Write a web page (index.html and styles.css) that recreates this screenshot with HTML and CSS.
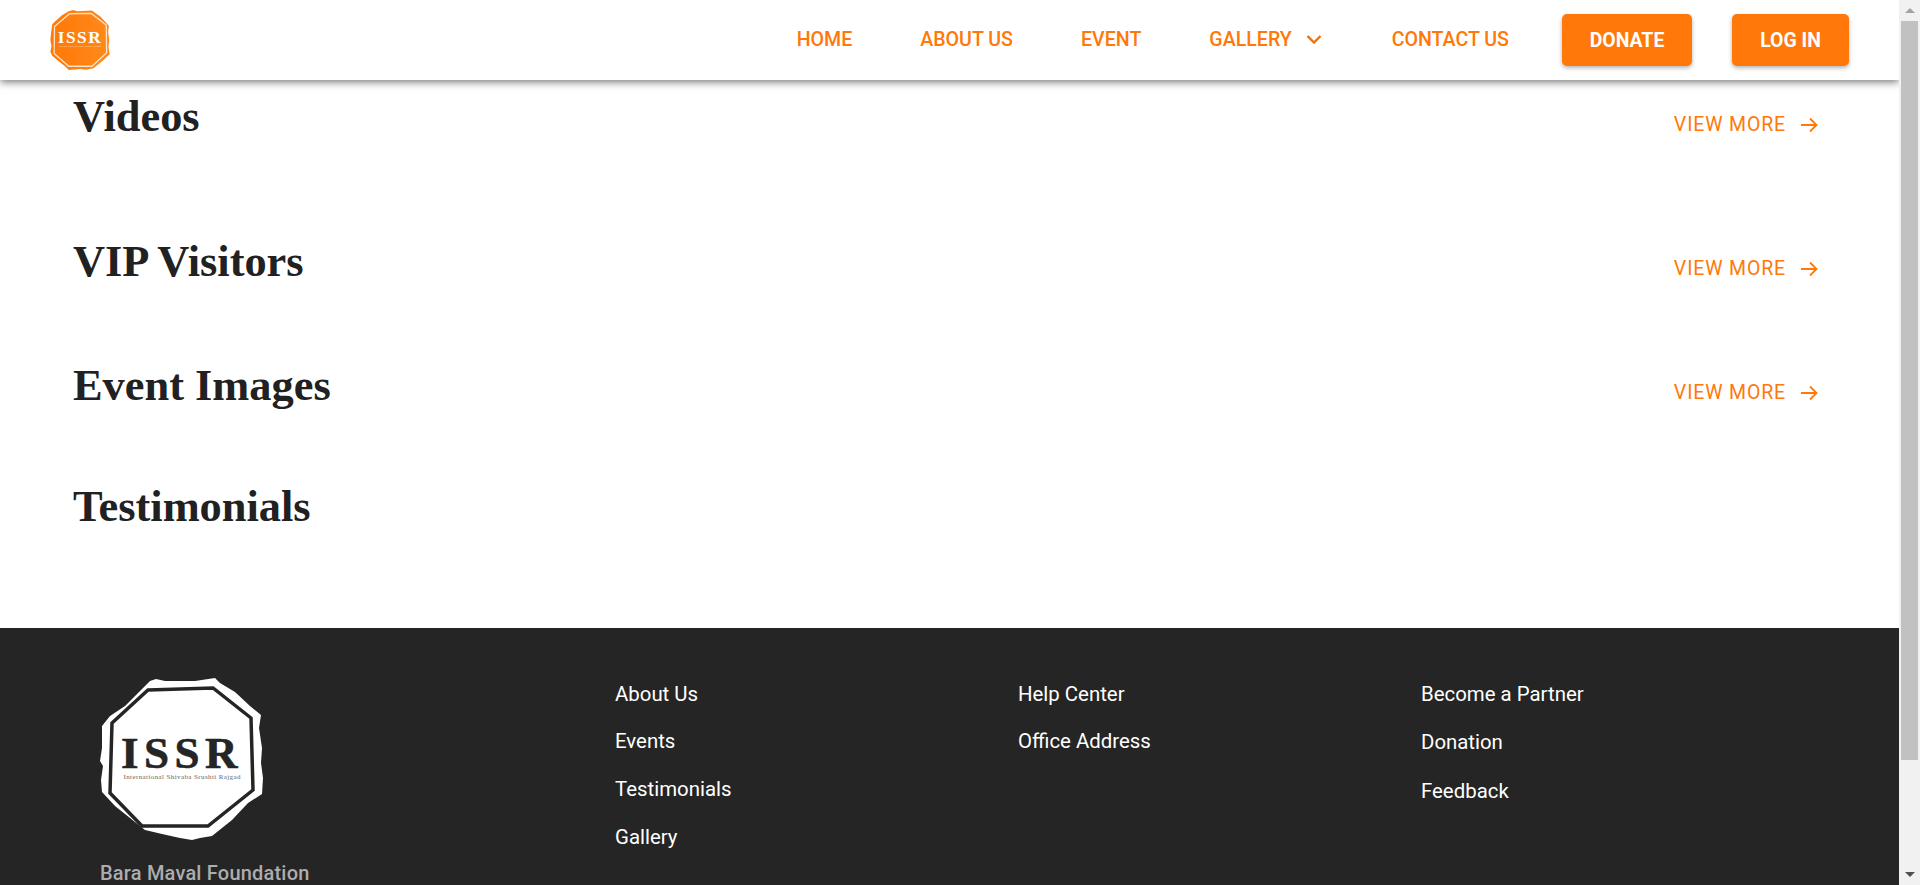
FILE: index.html
```html
<!DOCTYPE html>
<html lang="en">
<head>
    <meta charset="UTF-8">
    <title>ISSR</title>
    <link rel="stylesheet" href="styles.css">
</head>
<body>
    <div class="page">
        <header class="topbar">
            <a class="brand" href="#">
                <svg class="brand-logo" viewBox="0 0 160 160" width="60" height="60">
                    <defs>
                        <linearGradient id="logoFill" x1="0" x2="1" y1="0" y2="0">
                            <stop offset="0" stop-color="#ff7806"/>
                            <stop offset="1" stop-color="#ff8a1c"/>
                        </linearGradient>
                    </defs>
                    <polygon fill="url(#logoFill)" points="50,3 62,0 72,3 112,1 118,6 135,18 153,37 157,42 155,60 158,78 156,100 159,118 142,134 116,155 96,159 80,157 50,160 40,150 22,136 6,122 1,112 4,96 1,80 3,60 6,38 14,30 32,14"/>
                    <polygon fill="none" stroke="#ffe2c6" stroke-width="3.5" points="52,10 110,9 150,40 151,114 112,150 50,150 11,116 12,44"/>
                    <text x="80" y="88" text-anchor="middle" class="logo-text" fill="#fff">ISSR</text>
                    <text x="80" y="99" text-anchor="middle" class="logo-sub" fill="#ffe2c6" textLength="112">International Shivaba Srushti Rajgad</text>
                </svg>
            </a>
            <nav class="menu">
                <a href="#" class="menu-link">HOME</a>
                <a href="#" class="menu-link">ABOUT US</a>
                <a href="#" class="menu-link">EVENT</a>
                <a href="#" class="menu-link menu-gallery">GALLERY
                    <svg class="chevron" viewBox="0 0 16 11" width="16" height="11"><path d="M1.5 2 L8 8.5 L14.5 2" fill="none" stroke="#f0700a" stroke-width="2.4"/></svg>
                </a>
                <a href="#" class="menu-link menu-contact">CONTACT US</a>
                <a href="#" class="btn btn-donate">DONATE</a>
                <a href="#" class="btn btn-login">LOG IN</a>
            </nav>
        </header>

        <main class="content">
            <section class="row row-videos">
                <h2>Videos</h2>
                <a href="#" class="view-more">VIEW MORE
                    <svg viewBox="0 0 18 16" width="18" height="16"><path d="M1 8 H16.5 M10 1.5 L16.5 8 L10 14.5" fill="none" stroke="#ff7809" stroke-width="1.8"/></svg>
                </a>
            </section>
            <section class="row row-vip">
                <h2>VIP Visitors</h2>
                <a href="#" class="view-more">VIEW MORE
                    <svg viewBox="0 0 18 16" width="18" height="16"><path d="M1 8 H16.5 M10 1.5 L16.5 8 L10 14.5" fill="none" stroke="#ff7809" stroke-width="1.8"/></svg>
                </a>
            </section>
            <section class="row row-event">
                <h2>Event Images</h2>
                <a href="#" class="view-more">VIEW MORE
                    <svg viewBox="0 0 18 16" width="18" height="16"><path d="M1 8 H16.5 M10 1.5 L16.5 8 L10 14.5" fill="none" stroke="#ff7809" stroke-width="1.8"/></svg>
                </a>
            </section>
            <section class="row row-testimonials">
                <h2>Testimonials</h2>
            </section>
        </main>

        <footer class="footer">
            <div class="foot-brand">
                <svg class="foot-logo" viewBox="0 0 164 164" width="164" height="164">
                    <polygon fill="#fff" points="50,3 56,1 65,3 95,3 115,0 120,5 135,14 150,28 161,37 159,50 162,70 161,85 163,100 162,116 148,125 132,142 122,150 112,158 100,160 92,162 80,160 62,156 45,152 30,140 15,128 2,114 1,102 3,88 0,83 2,70 2,48 10,38 25,28 38,15"/>
                    <polygon fill="none" stroke="#252525" stroke-width="3.5" points="48,12 113,10 151,40 153,112 108,148 42,148 10,115 12,45"/>
                    <text x="82" y="90" text-anchor="middle" class="foot-logo-text" fill="#252525">ISSR</text>
                    <text x="82" y="101" text-anchor="middle" class="foot-logo-sub" fill="#666" textLength="117">International Shivaba Srushti Rajgad</text>
                </svg>
                <p class="foot-name">Bara Maval Foundation</p>
            </div>
            <ul class="foot-col">
                <li><a href="#">About Us</a></li>
                <li><a href="#">Events</a></li>
                <li><a href="#">Testimonials</a></li>
                <li><a href="#">Gallery</a></li>
            </ul>
            <ul class="foot-col">
                <li><a href="#">Help Center</a></li>
                <li><a href="#">Office Address</a></li>
            </ul>
            <ul class="foot-col foot-col-wide">
                <li><a href="#">Become a Partner</a></li>
                <li><a href="#">Donation</a></li>
                <li><a href="#">Feedback</a></li>
            </ul>
        </footer>
    </div>

    <div class="scrollbar">
        <div class="scroll-arrow scroll-up"></div>
        <div class="scroll-thumb"></div>
        <div class="scroll-arrow scroll-down"></div>
    </div>
</body>
</html>
```

FILE: styles.css
```css
* {
    box-sizing: border-box;
}
html, body {
    height: 885px;
}
body {
    margin: 0;
    display: flex;
    overflow: hidden;
    background: #fff;
    font-family: Roboto, Arial, sans-serif;
}
a {
    text-decoration: none;
}
.page {
    width: 1899px;
    height: 885px;
    overflow: hidden;
}

/* header */
.topbar {
    position: relative;
    z-index: 2;
    height: 80px;
    padding: 0 50px;
    display: flex;
    align-items: center;
    justify-content: space-between;
    background: #fff;
    box-shadow: 0 2px 8px rgba(0, 0, 0, 0.55);
}
.brand {
    display: flex;
}
.menu {
    display: flex;
    align-items: center;
}
.menu-link {
    margin-right: 68px;
    padding-bottom: 2px;
    color: #ff7809;
    font-size: 19.6px;
    font-weight: 500;
    white-space: nowrap;
}
.menu-link .chevron {
    margin-left: 9px;
    vertical-align: 1px;
}
.menu-gallery {
    margin-right: 70px;
}
.menu-contact {
    margin-right: 53px;
}
.btn {
    display: flex;
    align-items: center;
    justify-content: center;
    height: 52px;
    background: #ff7809;
    color: #fff;
    font-size: 19.4px;
    font-weight: 700;
    border-radius: 5px;
    box-shadow: 0 2px 4px rgba(0, 0, 0, 0.3);
}
.btn-donate {
    width: 130px;
    margin-right: 40px;
}
.btn-login {
    width: 117px;
}
.logo-text {
    font-family: "Liberation Serif", serif;
    font-size: 46px;
    font-weight: 700;
    letter-spacing: 4px;
}
.logo-sub {
    font-family: "Liberation Serif", serif;
    font-size: 6px;
}

/* sections */
.content {
    height: 548px;
    padding: 0 81px 0 73px;
}
.row {
    display: flex;
    justify-content: space-between;
    align-items: flex-start;
}
.row h2 {
    margin: 0;
    font-family: "Liberation Serif", "Times New Roman", serif;
    font-size: 44.4px;
    font-weight: 700;
    line-height: 52px;
    color: #212121;
}
.row-videos {
    padding-top: 10px;
    height: 149px;
}
.row-videos .view-more {
    margin-top: 23px;
}
.row-vip {
    height: 124px;
    padding-top: 6px;
}
.row-event {
    height: 127px;
    padding-top: 6px;
}
.view-more {
    display: flex;
    align-items: center;
    gap: 14px;
    margin-top: 22px;
    color: #ff7809;
    font-size: 19.5px;
    letter-spacing: 0.85px;
}

/* footer */
.footer {
    height: 257px;
    background: #252525;
    display: flex;
    padding: 50px 0 0 100px;
    color: #fff;
}
.foot-brand {
    width: 515px;
}
.foot-logo {
    display: block;
}
.foot-logo-text {
    font-family: "Liberation Serif", serif;
    font-size: 45px;
    font-weight: 700;
    letter-spacing: 5.5px;
    stroke: #252525;
    stroke-width: 0.6;
}
.foot-logo-sub {
    font-family: "Liberation Serif", serif;
    font-size: 7px;
}
.foot-name {
    margin: 19px 0 0;
    color: #adadad;
    font-size: 20px;
    font-weight: 500;
    letter-spacing: 0.2px;
}
.foot-col {
    list-style: none;
    margin: 0;
    padding: 3.8px 0 0;
    width: 403px;
    font-size: 20.4px;
}
.foot-col li {
    height: 47.6px;
}
.foot-col-wide li {
    height: 48.5px;
}
.foot-col a {
    color: #fff;
}

/* scrollbar */
.scrollbar {
    width: 21px;
    height: 885px;
    display: flex;
    flex-direction: column;
    background: #f1f1f1;
}
.scroll-arrow {
    flex: none;
    height: 21px;
    display: flex;
    justify-content: center;
    align-items: center;
}
.scroll-up::before,
.scroll-down::before {
    content: "";
    border-left: 5px solid transparent;
    border-right: 5px solid transparent;
}
.scroll-up::before {
    border-bottom: 5px solid #a3a3a3;
}
.scroll-down::before {
    border-top: 5px solid #505050;
}
.scroll-thumb {
    flex: none;
    width: 17px;
    height: 739px;
    margin-left: 2px;
    background: #c1c1c1;
}
.scroll-down {
    margin-top: auto;
}
```
